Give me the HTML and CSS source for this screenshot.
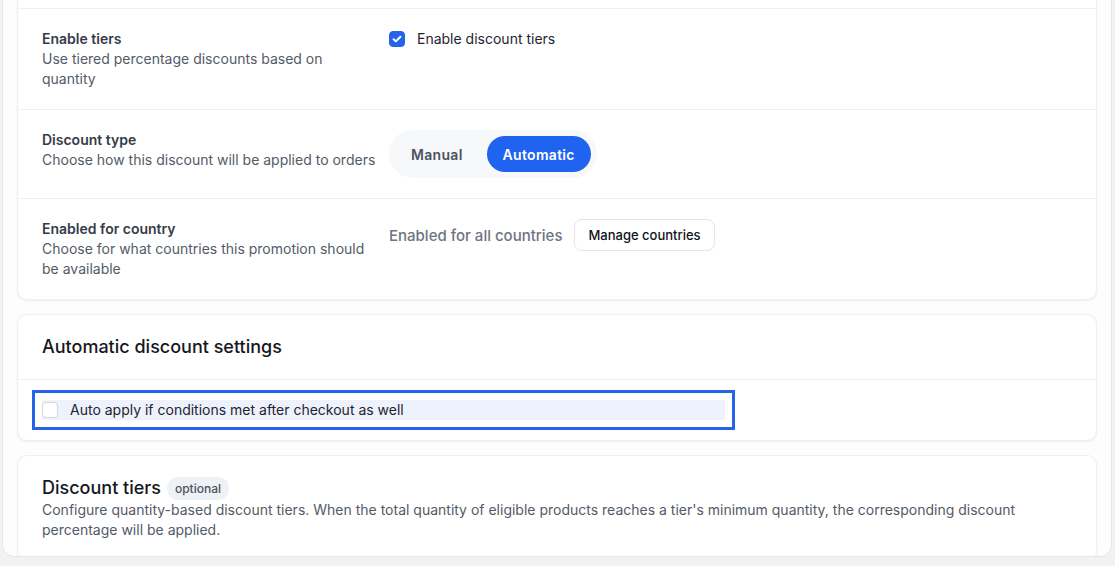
FILE: index.html
```html
<!DOCTYPE html>
<html lang="en">
<head>
  <meta charset="UTF-8">
  <meta name="viewport" content="width=device-width, initial-scale=1.0">
  <title>Discount settings</title>
  <link rel="stylesheet" href="styles.css">
</head>
<body>
  <div class="panel">
    <section class="card card-scrolled">
      <div class="row">
        <div class="row-label">
          <h3>Enable tiers</h3>
          <p>Use tiered percentage discounts based on quantity</p>
        </div>
        <div class="row-control">
          <label class="check">
            <span class="box checked">
              <svg viewBox="0 0 16 16" width="16" height="16"><path d="M4.6 8.3l2.2 2.1 4.6-4.7" fill="none" stroke="#fff" stroke-width="2" stroke-linecap="round" stroke-linejoin="round"/></svg>
            </span>
            Enable discount tiers
          </label>
        </div>
      </div>
      <div class="row">
        <div class="row-label">
          <h3>Discount type</h3>
          <p>Choose how this discount will be applied to orders</p>
        </div>
        <div class="row-control">
          <div class="segmented">
            <button class="seg-btn">Manual</button>
            <button class="seg-btn active">Automatic</button>
          </div>
        </div>
      </div>
      <div class="row">
        <div class="row-label">
          <h3>Enabled for country</h3>
          <p>Choose for what countries this promotion should be available</p>
        </div>
        <div class="row-control inline">
          <span class="muted">Enabled for all countries</span>
          <button class="btn">Manage countries</button>
        </div>
      </div>
    </section>

    <section class="card">
      <div class="card-header">
        <h2>Automatic discount settings</h2>
      </div>
      <div class="card-body">
        <label class="check highlight">
          <span class="box"></span>
          Auto apply if conditions met after checkout as well
        </label>
      </div>
    </section>

    <section class="card">
      <div class="card-header plain">
        <h2>Discount tiers <span class="badge">optional</span></h2>
        <p>Configure quantity-based discount tiers. When the total quantity of eligible products reaches a tier's minimum quantity, the corresponding discount percentage will be applied.</p>
      </div>
    </section>
  </div>
</body>
</html>
```

FILE: styles.css
```css
body {
  margin: 0;
  background-color: #f2f2f3;
  font-family: Inter, "Noto Sans", sans-serif;
  color: #1f2937;
}

.panel {
  box-sizing: border-box;
  width: 1110px;
  height: 557px;
  margin-left: 2px;
  padding: 0 14px;
  background: #fdfdfd;
  border: 1px solid #e4e6e9;
  border-top: none;
  border-radius: 0 0 12px 12px;
  overflow: hidden;
  display: flex;
  flex-direction: column;
  gap: 14px;
}

.card {
  flex-shrink: 0;
  background: #fff;
  border: 1px solid #eff0f2;
  border-radius: 10px;
  box-shadow: 0 1px 2px rgba(16, 24, 40, 0.07);
}

/* top of this card is scrolled out of view */
.card-scrolled {
  border-top: none;
  border-radius: 0 0 10px 10px;
  padding-top: 8px;
}

.row {
  display: grid;
  grid-template-columns: 338px 1fr;
  column-gap: 9px;
  padding: 20px 24px;
  border-top: 1px solid #eef0f3;
}

.row-label h3 {
  margin: 0;
  font-size: 14px;
  line-height: 20px;
  font-weight: 600;
  color: #363c47;
}

.row-label p,
.card-header p {
  margin: 0;
  font-size: 14px;
  line-height: 20px;
  color: #535b68;
}

.row-control.inline {
  display: flex;
  align-items: center;
  align-self: start;
  gap: 12px;
}

.check {
  display: flex;
  align-items: center;
  gap: 12px;
  font-size: 14px;
  line-height: 20px;
  color: #1f2430;
}

.box {
  box-sizing: border-box;
  width: 16px;
  height: 16px;
  border: 1px solid #d3d7dd;
  border-radius: 4px;
  background: #fff;
  display: flex;
}

.box.checked {
  background: #2563eb;
  border-color: #2563eb;
}

.box svg {
  margin: -1px;
}

.segmented {
  display: inline-flex;
  gap: 8px;
  padding: 6px;
  background: #f7f8fa;
  border-radius: 999px;
}

.seg-btn {
  height: 36px;
  padding: 0 16px;
  border: none;
  border-radius: 999px;
  background: transparent;
  font-family: inherit;
  font-size: 14px;
  font-weight: 600;
  letter-spacing: 0.3px;
  color: #4b5260;
}

.seg-btn.active {
  background: #1f63f0;
  color: #fff;
}

.muted {
  font-size: 15px;
  font-weight: 500;
  color: #6e7480;
}

.btn {
  height: 32px;
  padding: 0 13px;
  border: 1px solid #e3e5e9;
  border-radius: 8px;
  background: #fff;
  font-family: inherit;
  font-size: 13px;
  font-weight: 500;
  color: #111318;
}

.card-header {
  padding: 20px 24px;
  border-bottom: 1px solid #eef0f3;
}

.card-header.plain {
  border-bottom: none;
}

.card-header h2 {
  margin: 0;
  display: flex;
  align-items: center;
  gap: 6px;
  font-size: 18px;
  line-height: 24px;
  font-weight: 500;
  color: #15181e;
}

.badge {
  display: inline-block;
  padding: 0 8px;
  line-height: 23px;
  border-radius: 999px;
  background: #eef1f5;
  font-size: 12px;
  font-weight: 500;
  color: #4b5260;
}

.card-body {
  padding: 20px 24px;
}

.highlight {
  width: 683px;
  background: #eef2fd;
  outline: 3px solid #2563eb;
  outline-offset: 7px;
}
```
